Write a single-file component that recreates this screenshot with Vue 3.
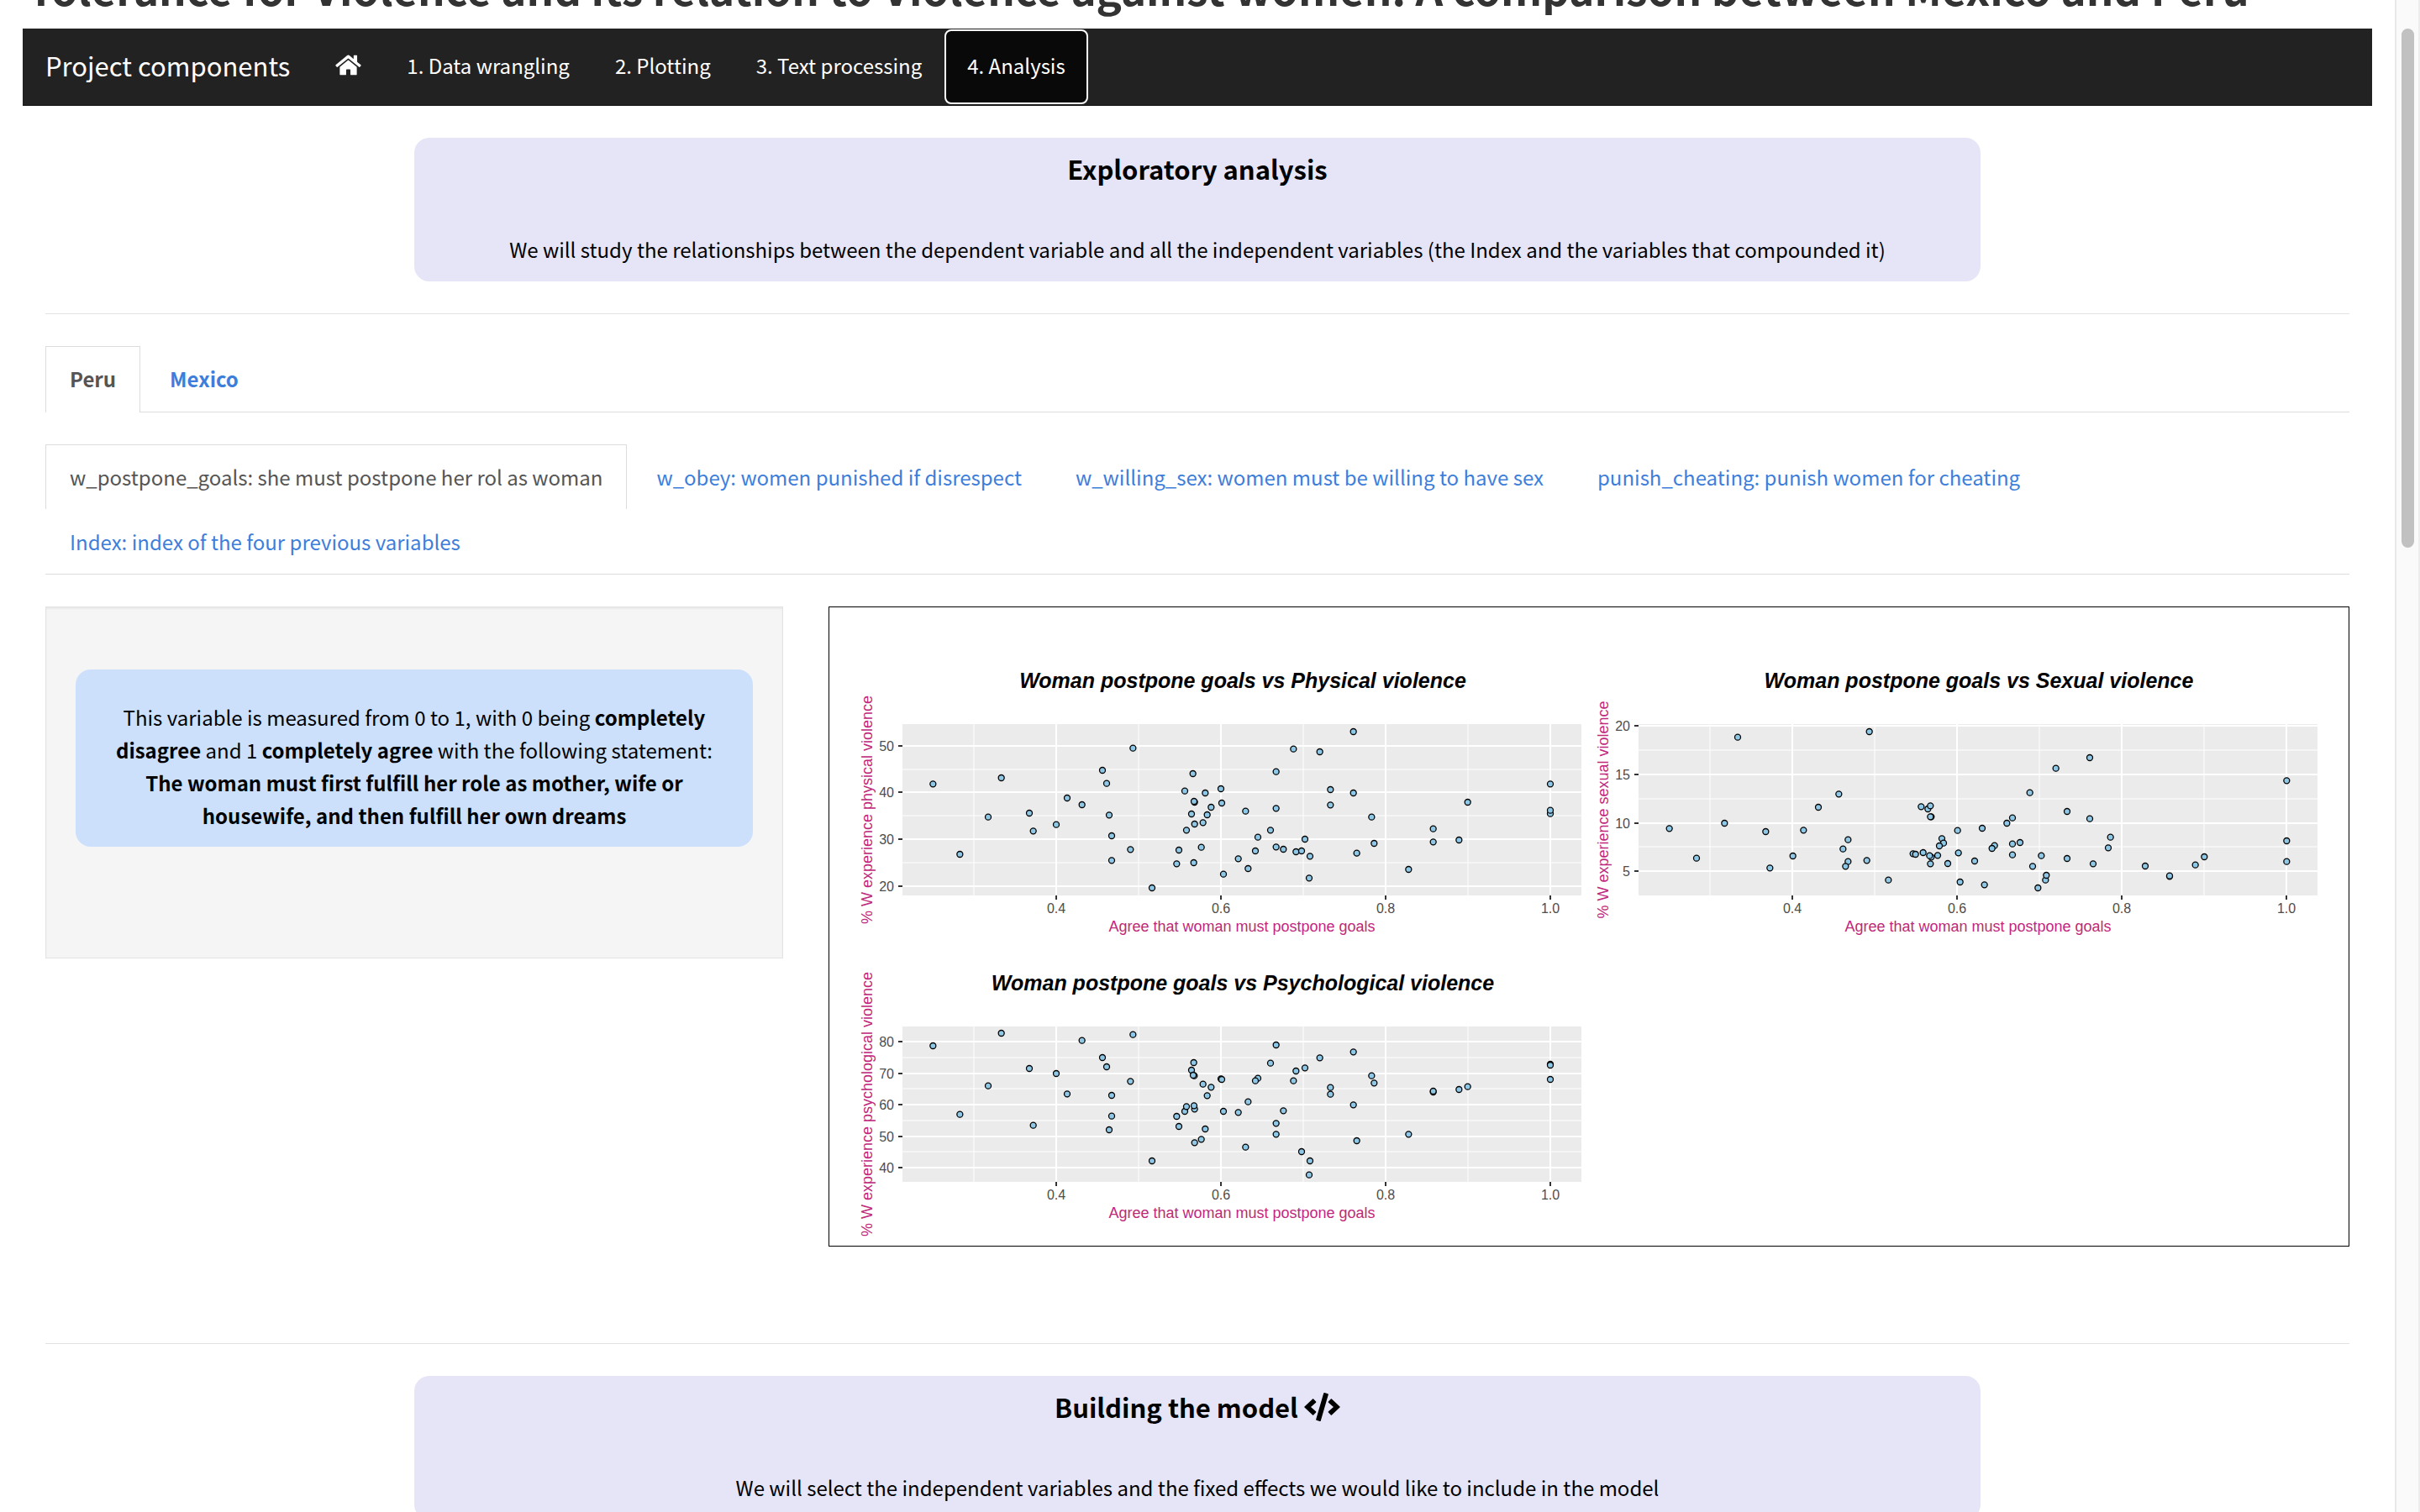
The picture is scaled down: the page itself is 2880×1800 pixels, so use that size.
<script setup>
const navItems = ['1. Data wrangling', '2. Plotting', '3. Text processing', '4. Analysis']
const countries = ['Peru', 'Mexico']
const variables = [
  'w_postpone_goals: she must postpone her rol as woman',
  'w_obey: women punished if disrespect',
  'w_willing_sex: women must be willing to have sex',
  'punish_cheating: punish women for cheating',
  'Index: index of the four previous variables',
]

// Horizontal scale shared by the three scatter plots
const xMajor = [[277, '0.4'], [473, '0.6'], [669, '0.8'], [865, '1.0']]
const xMinor = [179, 375, 571, 767]

// Points are stored at three times the plot resolution
const RES = 3

const plots = [
  {
    title: 'Woman postpone goals vs Physical violence',
    yTitle: '% W experience physical violence',
    x: -6, y: 58, height: 204,
    major: [[108, '50'], [163, '40'], [219, '30'], [275, '20']],
    minor: [136, 191, 247],
    points: [
      [391, 460], [635, 438], [588, 578], [487, 711], [735, 564], [749, 628], [831, 605], [870, 510],
      [923, 534], [996, 411], [1011, 458], [1020, 571], [1029, 645], [1029, 733], [1096, 694], [1105, 332],
      [1173, 831], [1261, 745], [1269, 696], [1290, 485], [1296, 625], [1314, 567], [1319, 423], [1325, 525],
      [1323, 522], [1325, 603], [1322, 741], [1349, 686], [1355, 598], [1363, 492], [1370, 570], [1384, 543],
      [1419, 477], [1422, 528], [1428, 782], [1481, 727], [1507, 557], [1516, 762], [1542, 699], [1551, 650],
      [1596, 625], [1616, 416], [1616, 547], [1616, 685], [1642, 693], [1678, 335], [1687, 702], [1707, 699],
      [1719, 657], [1734, 796], [1737, 718], [1772, 345], [1810, 480], [1810, 535], [1892, 273], [1892, 492],
      [1904, 707], [1957, 578], [1966, 672], [2089, 765], [2177, 620], [2177, 667], [2269, 660], [2300, 525],
      [2595, 460], [2595, 566], [2595, 554],
    ],
  },
  {
    title: 'Woman postpone goals vs Sexual violence',
    yTitle: '% W experience sexual violence',
    x: 870, y: 58, height: 204,
    major: [[84, '20'], [142, '15'], [200, '10'], [257, '5']],
    minor: [113, 171, 228],
    points: [
      [392, 619], [636, 293], [489, 725], [589, 600], [736, 630], [751, 760], [833, 717], [871, 625],
      [924, 543], [997, 496], [1012, 692], [1030, 659], [1030, 737], [1021, 754], [1097, 733], [1106, 273],
      [1174, 803], [1262, 709], [1271, 711], [1291, 541], [1298, 705], [1315, 549], [1324, 538], [1327, 577],
      [1324, 577], [1327, 721], [1321, 716], [1324, 745], [1350, 715], [1365, 655], [1371, 671], [1356, 681],
      [1386, 744], [1421, 626], [1424, 706], [1430, 810], [1482, 735], [1509, 618], [1517, 820], [1553, 680],
      [1544, 690], [1597, 600], [1617, 581], [1617, 674], [1617, 713], [1644, 669], [1679, 491], [1689, 754],
      [1708, 831], [1720, 716], [1735, 803], [1738, 786], [1772, 404], [1812, 558], [1812, 726], [1893, 366],
      [1893, 584], [1905, 745], [1959, 688], [1967, 650], [2091, 753], [2178, 790], [2178, 788], [2270, 749],
      [2302, 720], [2596, 448], [2596, 663], [2596, 737],
    ],
  },
  {
    title: 'Woman postpone goals vs Psychological violence',
    yTitle: '% W experience psychological violence',
    x: -6, y: 418, height: 185,
    major: [[100, '80'], [138, '70'], [175, '60'], [213, '50'], [250, '40']],
    minor: [119, 156, 194, 231],
    points: [
      [391, 315], [635, 270], [588, 458], [487, 560], [735, 396], [749, 599], [831, 414], [870, 487],
      [923, 296], [996, 357], [1011, 390], [1029, 492], [1029, 566], [1020, 615], [1096, 442], [1105, 275],
      [1173, 726], [1261, 567], [1269, 603], [1290, 549], [1296, 532], [1314, 402], [1322, 375], [1324, 422],
      [1320, 420], [1325, 541], [1323, 529], [1325, 661], [1349, 649], [1355, 452], [1363, 612], [1370, 493],
      [1384, 463], [1419, 433], [1422, 435], [1428, 549], [1481, 553], [1507, 677], [1516, 515], [1551, 431],
      [1542, 440], [1596, 377], [1616, 312], [1616, 592], [1616, 631], [1642, 547], [1678, 440], [1687, 405],
      [1719, 394], [1707, 693], [1737, 726], [1734, 776], [1772, 358], [1810, 464], [1810, 488], [1892, 337],
      [1892, 526], [1904, 654], [1957, 422], [1966, 448], [2089, 631], [2177, 480], [2177, 477], [2269, 471],
      [2300, 461], [2595, 381], [2595, 384], [2595, 435],
    ],
  },
]
</script>

<template>
  <div class="window">
    <div class="page">
      <header class="masthead">
        <h1>Tolerance for Violence and its relation to Violence against women: A comparison between Mexico and Peru</h1>
      </header>

      <nav class="navbar">
        <a class="brand" href="#">Project components</a>
        <a class="nav-link" href="#" aria-label="Home">
          <svg class="home-icon" viewBox="0 0 576 512" aria-hidden="true">
            <path d="M280.37 148.26L96 300.11V464a16 16 0 0 0 16 16l112.06-.29a16 16 0 0 0 15.92-16V368a16 16 0 0 1 16-16h64a16 16 0 0 1 16 16v95.64a16 16 0 0 0 16 16.05L464 480a16 16 0 0 0 16-16V300L295.67 148.26a12.19 12.19 0 0 0-15.3 0zM571.6 251.47L488 182.56V44.05a12 12 0 0 0-12-12h-56a12 12 0 0 0-12 12v72.61L318.47 43a48 48 0 0 0-61 0L4.34 251.47a12 12 0 0 0-1.6 16.9l25.5 31A12 12 0 0 0 45.15 301l235.22-193.74a12.19 12.19 0 0 1 15.3 0L530.9 301a12 12 0 0 0 16.9-1.6l25.5-31a12 12 0 0 0-1.7-16.93z" />
          </svg>
        </a>
        <a v-for="(item, i) in navItems" :key="item" class="nav-link" :class="{ active: i === 3 }" href="#">{{ item }}</a>
      </nav>

      <main class="content">
        <section class="intro">
          <h2>Exploratory analysis</h2>
          <p>We will study the relationships between the dependent variable and all the independent variables (the Index and the variables that compounded it)</p>
        </section>

        <hr />

        <div class="tabs countries">
          <a v-for="(c, i) in countries" :key="c" class="tab" :class="{ active: i === 0 }" href="#">{{ c }}</a>
        </div>

        <div class="tabs">
          <a v-for="(v, i) in variables" :key="v" class="tab" :class="{ active: i === 0 }" href="#">{{ v }}</a>
        </div>

        <div class="columns">
          <aside class="well">
            <p class="note">
              This variable is measured from 0 to 1, with 0 being <b>completely disagree</b> and 1
              <b>completely agree</b> with the following statement:
              <b>The woman must first fulfill her role as mother, wife or housewife, and then fulfill her own dreams</b>
            </p>
          </aside>

          <div class="figure">
            <svg class="chart" viewBox="1 1 1808 760">
              <g v-for="p in plots" :key="p.title" :transform="`translate(${p.x} ${p.y})`">
                <text class="plot-title" x="499" y="39">{{ p.title }}</text>
                <rect class="panel" x="94" y="82" width="808" :height="p.height" />
                <line v-for="y in p.minor" :key="'my' + y" class="minor" x1="94" x2="902" :y1="y" :y2="y" />
                <line v-for="x in xMinor" :key="'mx' + x" class="minor" :x1="x" :x2="x" y1="82" :y2="82 + p.height" />
                <line v-for="[y] in p.major" :key="'y' + y" class="major" x1="94" x2="902" :y1="y" :y2="y" />
                <line v-for="[x] in xMajor" :key="'x' + x" class="major" :x1="x" :x2="x" y1="82" :y2="82 + p.height" />
                <circle v-for="([x, y], i) in p.points" :key="i" class="point" :cx="x / RES" :cy="y / RES" r="3.5" />
                <template v-for="[y, label] in p.major" :key="'ly' + y">
                  <line class="tick" x1="89" x2="94" :y1="y" :y2="y" />
                  <text class="tick-label end" x="84" :y="y + 6">{{ label }}</text>
                </template>
                <template v-for="[x, label] in xMajor" :key="'lx' + x">
                  <line class="tick" :x1="x" :x2="x" :y1="82 + p.height" :y2="87 + p.height" />
                  <text class="tick-label" :x="x" :y="103 + p.height">{{ label }}</text>
                </template>
                <text class="axis-title" x="498" :y="125 + p.height">Agree that woman must postpone goals</text>
                <text class="axis-title" :transform="`translate(58 ${82 + p.height / 2}) rotate(-90)`">{{ p.yTitle }}</text>
              </g>
            </svg>
          </div>
        </div>

        <hr />

        <section class="intro">
          <h2>
            Building the model
            <svg class="code-icon" viewBox="0 0 640 512" aria-hidden="true">
              <path d="M278.9 511.5l-61-17.7c-6.4-1.8-10-8.5-8.2-14.9L346.2 8.7c1.8-6.4 8.5-10 14.9-8.2l61 17.7c6.4 1.8 10 8.5 8.2 14.9L293.8 503.3c-1.9 6.4-8.5 10.1-14.9 8.2zm-114-112.2l43.5-46.4c4.6-4.9 4.3-12.7-.8-17.2L117 256l90.6-79.7c5.1-4.5 5.5-12.3.8-17.2l-43.5-46.4c-4.5-4.8-12.1-5.1-17-.5L3.8 247.2c-5.1 4.7-5.1 12.8 0 17.5l144.1 135.1c4.9 4.6 12.5 4.4 17-.5zm327.2.6l144.1-135.1c5.1-4.7 5.1-12.8 0-17.5L492.1 112.1c-4.8-4.5-12.4-4.3-17 .5L431.6 159c-4.6 4.9-4.3 12.7.8 17.2L523 256l-90.6 79.7c-5.1 4.5-5.5 12.3-.8 17.2l43.5 46.4c4.5 4.9 12.1 5.1 17 .6z" />
            </svg>
          </h2>
          <p>We will select the independent variables and the fixed effects we would like to include in the model</p>
        </section>
      </main>
    </div>

    <div class="scrollbar" aria-hidden="true">
      <div class="thumb"></div>
    </div>
  </div>
</template>

<style>
html,
body {
  background: #fff;
}
</style>

<style scoped>
* {
  box-sizing: border-box;
}

.window {
  display: flex;
  height: 100vh;
  overflow: hidden;
  font-family: "Noto Sans CJK SC", "Open Sans", sans-serif;
  font-size: 24px;
  line-height: 39px;
  color: #333;
}

a {
  color: #3d7edb;
  text-decoration: none;
}

.page {
  flex: 1;
  min-width: 0;
  padding: 0 27px;
}

/* The title is scrolled most of the way past the top edge */
.masthead {
  display: flex;
  align-items: flex-end;
  height: 34px;
  overflow: hidden;
}

h1 {
  flex: none;
  margin: 0 0 21px;
  padding-left: 6px;
  font-size: 51px;
  line-height: 56px;
  font-weight: 700;
  white-space: nowrap;
}

.navbar {
  display: flex;
  height: 92px;
  background: #222;
  border-bottom: 1px solid #101010;
}

.brand,
.nav-link {
  display: flex;
  align-items: center;
  padding: 0 27px 4px;
  color: #fff;
}

.brand {
  font-size: 31px;
}

.nav-link.active {
  margin: 3px 2px;
  padding: 0 25px 4px;
  background: #090909;
  border-radius: 6px;
  outline: 2px solid #fff;
}

.home-icon {
  width: 31px;
  height: 27px;
  fill: #fff;
}

.content {
  padding: 0 27px;
}

.intro {
  width: 68%;
  margin: 38px auto;
  padding: 17px 27px 19px;
  background: #e6e5f7;
  border-radius: 18px;
  color: #000;
  text-align: center;
}

.intro h2 {
  margin: 0 0 57px;
  font-size: 31px;
  line-height: 40px;
  font-weight: 700;
}

.intro p {
  margin: 0;
  line-height: 38px;
}

.code-icon {
  width: 43px;
  height: 34px;
  vertical-align: -4px;
}

hr {
  height: 1px;
  margin: 38px 0;
  background: #e2e2e2;
  border: 0;
}

.tabs {
  display: flex;
  flex-wrap: wrap;
  margin-bottom: 38px;
  border-bottom: 1px solid #ddd;
}

.tab {
  height: 77px;
  margin-right: 6px;
  padding: 18px 28px 17px;
  border: 1px solid transparent;
  border-bottom: 0;
}

.tab.active {
  background: #fff;
  border-color: #ddd;
  color: #555;
}

.countries {
  font-weight: 700;
}

.countries .tab {
  height: 78px;
}

.countries .tab.active {
  height: 79px;
  margin-bottom: -1px;
}

.columns {
  display: grid;
  grid-template-columns: minmax(0, 878fr) minmax(0, 1810fr);
  align-items: start;
  gap: 54px;
  margin-bottom: 115px;
}

.well {
  padding: 74px 35px 132px;
  background: #f5f5f5;
  border: 1px solid #e3e3e3;
  box-shadow: inset 0 2px 2px rgba(0, 0, 0, 0.05);
}

.note {
  margin: 0;
  padding: 37px 27px 18px;
  background: #cce0fc;
  border-radius: 18px;
  color: #000;
  text-align: center;
}

.figure {
  border: 1px solid #000;
}

.chart {
  display: block;
  width: 100%;
  height: auto;
  font-family: "Liberation Sans", Arial, sans-serif;
  text-anchor: middle;
}

.plot-title {
  font-size: 25px;
  font-weight: 700;
  font-style: italic;
  fill: #000;
}

.panel {
  fill: #ebebeb;
}

.major,
.minor {
  stroke: #fff;
  stroke-width: 2;
}

.minor {
  stroke-width: 1;
}

.tick {
  stroke: #333;
  stroke-width: 2;
}

.tick-label {
  font-size: 16px;
  fill: #4d4d4d;
}

.tick-label.end {
  text-anchor: end;
}

.axis-title {
  font-size: 18px;
  fill: #c0287c;
}

.point {
  fill: #8fc8e6;
  stroke: #000;
  stroke-width: 1.3;
}

.scrollbar {
  flex: none;
  width: 30px;
  padding: 34px 5px 0 6px;
  background: #fafafa;
  border-left: 2px solid #e8e8e8;
  border-right: 2px solid #ededed;
}

.thumb {
  height: 35%;
  background: #c1c1c1;
  border-radius: 8px;
}
</style>
